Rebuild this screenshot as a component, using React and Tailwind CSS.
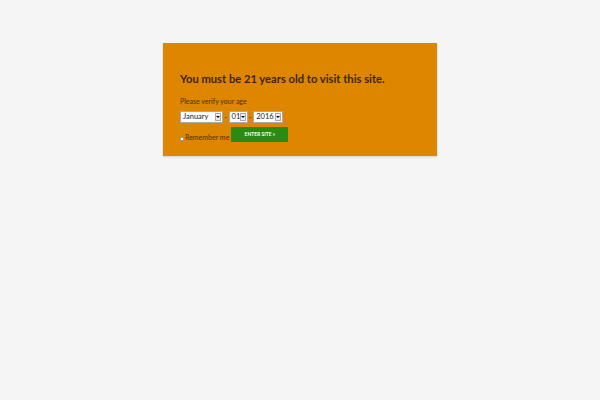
import React from 'react';

function FakeSelect({ value, width }) {
  return (
    <div
      className="flex h-[12px] items-center justify-between border border-[#a9a9a9] bg-white pl-[2px]"
      style={{ width }}
    >
      <span className="text-[7.5px] leading-none text-[#222]">{value}</span>
      <span className="mr-[1px] flex h-[8px] w-[6px] items-center justify-center border border-[#aaa] bg-[#ececec]">
        <span className="h-0 w-0 border-x-[2px] border-t-[2px] border-x-transparent border-t-[#111]" />
      </span>
    </div>
  );
}

export default function App() {
  return (
    <div className="min-h-[400px] w-full bg-[#f5f5f5] pt-[43px] font-['Lato','Liberation_Sans',sans-serif]">
      <div className="mx-auto w-[274px] bg-[#de8600] px-[17px] pb-[14px] pt-[28px] shadow-[0_1px_2px_rgba(0,0,0,0.15)]">
        <h1 className="text-[11.2px] font-bold leading-[16px] text-[#3b2500]">
          You must be 21 years old to visit this site.
        </h1>
        <p className="mt-[10px] text-[7px] leading-[9px] text-[#4a3000]">Please verify your age</p>
        <div className="mt-[5px] flex items-center">
          <FakeSelect value="January" width={43} />
          <span className="mx-[1.5px] text-[7px] text-[#3b2500]">-</span>
          <FakeSelect value="01" width={19} />
          <span className="mx-[1.5px] text-[7px] text-[#3b2500]">-</span>
          <FakeSelect value="2016" width={30} />
        </div>
        <div className="mt-[4px] flex items-end">
          <span className="mb-[1px] h-[4px] w-[4px] border border-[#999] bg-white" />
          <span className="ml-[1px] text-[7px] leading-[9px] text-[#4a3000]">Remember me</span>
          <button className="ml-[2px] h-[15px] w-[57px] bg-[#2a8b12] text-[5px] font-bold uppercase text-white">
            Enter site »
          </button>
        </div>
      </div>
    </div>
  );
}
